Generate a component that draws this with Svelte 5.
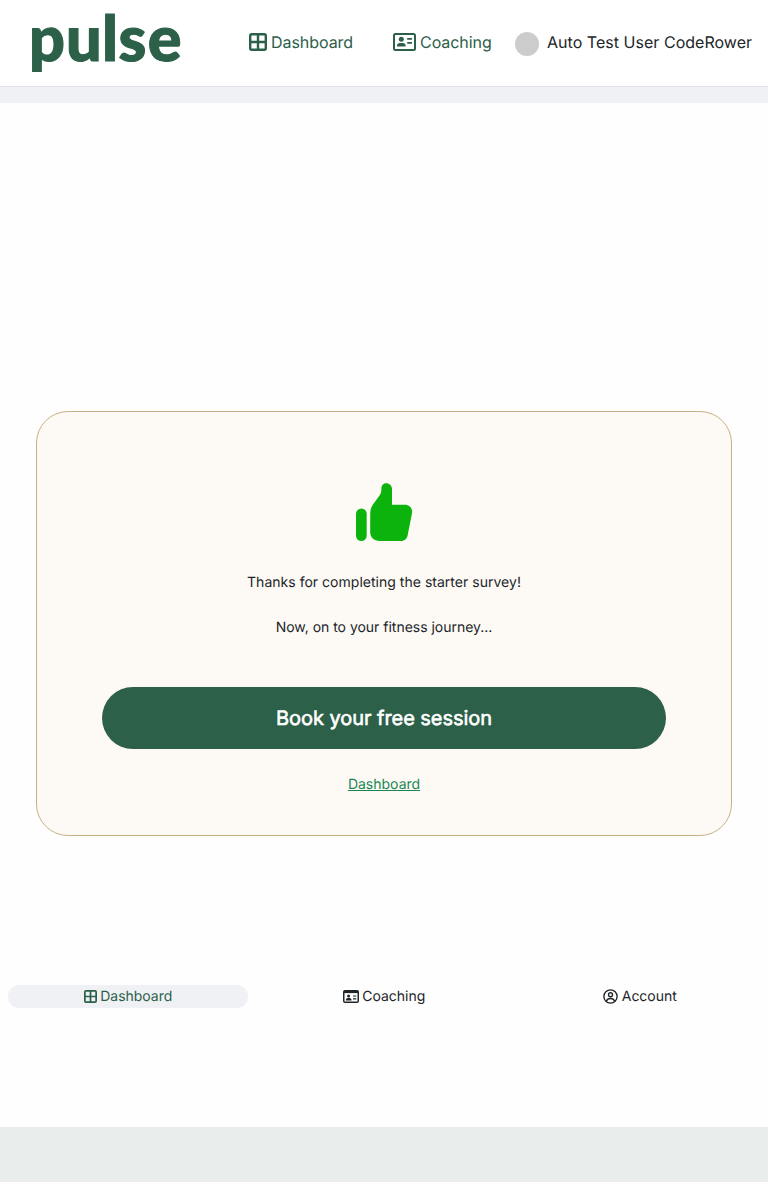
<script>
  const tabs = [
    { label: 'Dashboard', icon: 'grid', active: true },
    { label: 'Coaching', icon: 'card', active: false },
    { label: 'Account', icon: 'user', active: false }
  ];
</script>

{#snippet grid(size)}
  <svg width={size} height={size} viewBox="0 0 18 18" fill="none" stroke="currentColor" stroke-width="2.4">
    <rect x="1.2" y="1.2" width="15.6" height="15.6" rx="1.5" />
    <path d="M9 1v16M1 9h16" />
  </svg>
{/snippet}

<div class="page">
  <header>
    <a class="logo" href="#home" aria-label="pulse">
      <svg width="150" height="68" viewBox="0 0 150 68">
        <text x="-2.9 34 69.9 86.5 115.7" y="51.6">pulse</text>
      </svg>
    </a>
    <a class="nav dash" href="#dashboard">{@render grid(18)}<span>Dashboard</span></a>
    <a class="nav coach" href="#coaching">
      <svg width="23" height="18" viewBox="0 0 23 18" fill="none" stroke="currentColor">
        <rect x="1" y="1" width="21" height="16" rx="1.5" stroke-width="2" />
        <circle cx="8.3" cy="6.3" r="2.5" fill="currentColor" stroke="none" />
        <path d="M4 13.5v-1c0-1.5 1.3-2.5 2.7-2.5h3.2c1.4 0 2.7 1 2.7 2.5v1z" fill="currentColor" stroke="none" />
        <path d="M14.2 5.8h4.8M14.2 9.8h4.8" stroke-width="1.7" />
      </svg>
      <span>Coaching</span>
    </a>
    <div class="user"><i class="avatar"></i><span>Auto Test User CodeRower</span></div>
  </header>
  <div class="band"></div>

  <main>
    <section class="card">
      <svg class="thumb" width="57" height="59" viewBox="0 0 57 59" fill="#0db30d">
        <rect x="0" y="25.5" width="10.7" height="32.5" rx="5.35" />
        <path d="M25.5 5C25.5 2.2 27.7.2 30.3.2 33.5.2 36 2.8 36 6v15.7h13c4.7 0 7.9 4 7 8.5l-4.4 22.3c-.7 3.4-3.2 5.5-6.5 5.5H23.5c-5.5 0-9.3-3.7-9.3-9V31c0-4.2 1-7.2 3.5-10.5l4-5.4C24.7 11.4 25.5 9 25.5 5Z" />
      </svg>
      <p>Thanks for completing the starter survey!</p>
      <p class="next">Now, on to your fitness journey...</p>
      <button>Book your free session</button>
      <a class="link" href="#dashboard">Dashboard</a>
    </section>
  </main>

  <nav class="tabs">
    {#each tabs as tab}
      <a class="tab" class:active={tab.active} href="#{tab.label}">
        {#if tab.icon === 'grid'}
          {@render grid(13)}
        {:else if tab.icon === 'card'}
          <svg width="16" height="13" viewBox="0 0 16 13" fill="none" stroke="currentColor">
            <rect x=".75" y=".75" width="14.5" height="11.5" rx="1.3" stroke-width="1.5" />
            <path d="M.8 1.9h14.4" stroke-width="2.4" />
            <circle cx="5.6" cy="5.9" r="1.5" fill="currentColor" stroke="none" />
            <path d="M2.8 10.5c0-1.5.8-2.5 2-2.5h1.8c1.2 0 2 1 2 2.5z" fill="currentColor" stroke="none" />
            <path d="M10 6h3.3M10 8.8h3.3" stroke-width="1.2" />
          </svg>
        {:else}
          <svg width="15" height="15" viewBox="0 0 15 15" fill="none" stroke="currentColor" stroke-width="1.35">
            <circle cx="7.5" cy="7.5" r="6.6" />
            <circle cx="7.5" cy="5.7" r="2" />
            <path d="M3.5 12.2c.5-1.9 1.9-2.7 4-2.7s3.5.8 4 2.7" />
          </svg>
        {/if}
        <span>{tab.label}</span>
      </a>
    {/each}
  </nav>
  <footer></footer>
</div>

<style>
  :global(body) { background: #fefefe; }
  .page {
    height: 1182px;
    display: flex;
    flex-direction: column;
    color: #212529;
    font: 400 14px/22px Inter, "Liberation Sans", sans-serif;
    text-rendering: geometricPrecision;
  }
  svg { display: block; flex: none; }
  a { color: inherit; text-decoration: none; }
  header {
    height: 86px;
    box-sizing: border-box;
    display: flex;
    align-items: center;
    padding-left: 32px;
    background: #fff;
    font-size: 16px;
    line-height: 24px;
    white-space: nowrap;
  }
  .logo svg { overflow: visible; }
  .logo text { font: 900 63px Lato, sans-serif; fill: #2c6049; stroke: #2c6049; stroke-width: 1.1px; }
  .nav { display: flex; align-items: center; gap: 4px; color: #2c6049; letter-spacing: -.05px; }
  .nav, .user { padding-bottom: 2px; }
  .dash { margin-left: 67px; width: 104px; }
  .coach { margin-left: 40px; width: 98px; }
  .user { margin-left: 24px; display: flex; align-items: center; gap: 8px; letter-spacing: .03px; }
  .avatar { width: 24px; height: 24px; border-radius: 50%; background: #ccc; position: relative; top: 2px; }
  .band { height: 17px; box-sizing: border-box; border-top: 1px solid #dee2e6; background: #eff1f5; }
  main { height: 882px; box-sizing: border-box; padding: 308px 36px 0; }
  .card {
    height: 425px;
    box-sizing: border-box;
    display: flex;
    flex-direction: column;
    align-items: center;
    padding: 71px 65px 0;
    border: 1px solid #c8b188;
    border-radius: 32px;
    background: #fdfaf5;
  }
  p { margin: 30px 0 0; letter-spacing: .02px; }
  .next { margin-top: 23px; letter-spacing: -.02px; }
  button {
    width: 100%;
    height: 62px;
    margin-top: 48px;
    border: 0;
    border-radius: 31px;
    background: #2c6049;
    color: #fff;
    font: 400 20px/30px Inter, "Liberation Sans", sans-serif;
    letter-spacing: -.05px;
    text-rendering: geometricPrecision;
    -webkit-text-stroke: .6px #fff;
  }
  .link { margin-top: 25px; color: #198754; text-decoration: underline; }
  .tabs { height: 142px; display: grid; grid-template-columns: repeat(3, 240px); column-gap: 16px; padding: 0 8px; align-items: start; }
  .tab { height: 23px; box-sizing: border-box; padding-bottom: 1px; display: flex; align-items: center; justify-content: center; gap: 3.5px; border-radius: 12px; letter-spacing: -.03px; }
  .tab span { padding-top: 2px; }
  .active { background: #eff1f5; color: #2c6049; }
  footer { height: 55px; background: #e9eeec; }
</style>
